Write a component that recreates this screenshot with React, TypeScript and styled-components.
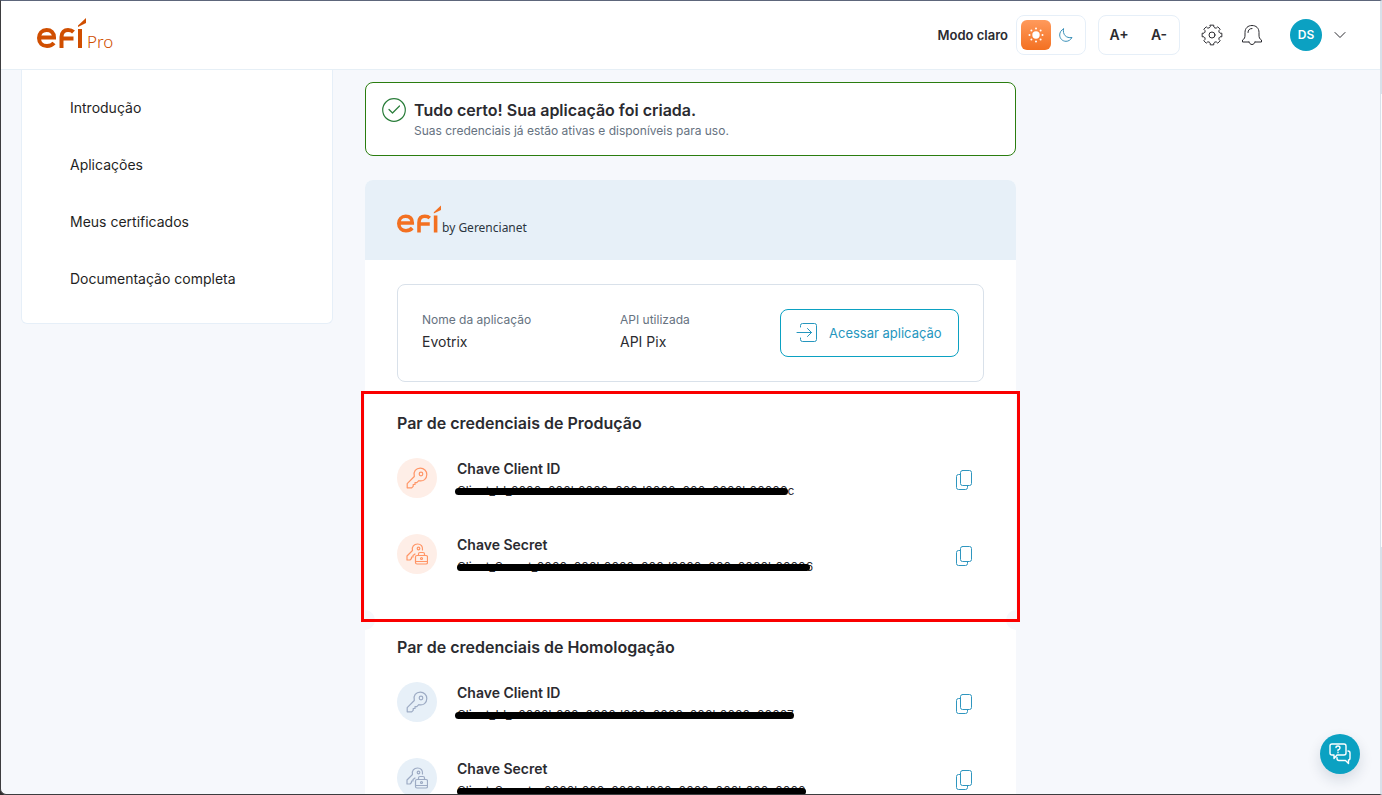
import React from "react";
import styled, { createGlobalStyle, css } from "styled-components";

const Global = createGlobalStyle`
  *, *::before, *::after { box-sizing: border-box; }
  html, body, #root { height: 100%; }
  body {
    margin: 0;
    background: #2e2c2c;
    color: #2b2b30;
    font-family: Inter, "Open Sans", sans-serif;
    font-size: 14px;
    line-height: 20px;
  }
  button { font: inherit; color: inherit; background: none; border: 0; padding: 0; cursor: pointer; }
  h1, h2, h3, p, dl, dt, dd, ul { margin: 0; padding: 0; }
`;

const Window = styled.div`
  height: 100vh;
  display: flex;
  flex-direction: column;
  overflow: hidden;
  background: #f6f8fc;
  border: 1px solid #3d3d3f;
  border-top-color: #5d667b;
  border-right: 2px solid #d8e1ea;
  border-bottom-left-radius: 6px;
`;

const ScrollTrack = styled.div`
  position: fixed;
  top: 94px;
  right: 0;
  bottom: 248px;
  width: 1px;
  background: #fbfcfe;
`;

const Header = styled.header`
  flex: none;
  height: 69px;
  padding: 0 34px 0 36px;
  display: flex;
  align-items: center;
  justify-content: space-between;
  background: #fff;
  border-bottom: 1px solid #e6eff6;
`;

const Brand = styled.a<{ $color: string; $raised?: boolean }>`
  display: flex;
  align-items: flex-end;
  gap: 1px;
  padding-bottom: ${(p) => (p.$raised ? 4 : 0)}px;
  color: ${(p) => p.$color};
  text-decoration: none;
`;

const BrandSuffix = styled.span<{ $small?: boolean }>`
  font-family: "Noto Sans", sans-serif;
  font-size: ${(p) => (p.$small ? 12 : 17)}px;
  font-weight: ${(p) => (p.$small ? 400 : 300)};
  line-height: ${(p) => (p.$small ? 10 : 12)}px;
  color: ${(p) => (p.$small ? "#2b3540" : "inherit")};
`;

const Tools = styled.div`
  display: flex;
  align-items: center;
`;

const ModeLabel = styled.span`
  font-size: 13px;
  font-weight: 600;
  margin-right: 8px;
`;

const Group = styled.div<{ $gap?: number }>`
  display: flex;
  align-items: center;
  gap: ${(p) => p.$gap ?? 0}px;
  height: 40px;
  padding: 0 4px;
  margin-right: 12px;
  border: 1px solid #e6eff8;
  border-radius: 8px;
`;

const ModeButton = styled.button<{ $active?: boolean }>`
  width: 30px;
  height: 30px;
  display: grid;
  place-items: center;
  border-radius: 6px;
  color: #3a8fb7;
  ${(p) =>
    p.$active &&
    css`
      color: #fff;
      background: linear-gradient(#ff9a5c, #f37021);
    `}
`;

const SizeButton = styled.button`
  width: 32px;
  height: 30px;
  font-weight: 600;
`;

const IconButton = styled.button`
  width: 40px;
  height: 40px;
  display: grid;
  place-items: center;
`;

const Profile = styled.button`
  display: flex;
  align-items: center;
  gap: 12px;
  margin-left: 18px;
`;

const Avatar = styled.span`
  width: 32px;
  height: 32px;
  border-radius: 50%;
  background: #0ba1c2;
  color: #fff;
  font-size: 12px;
  font-weight: 600;
  line-height: 32px;
`;

const Body = styled.div`
  flex: 1;
  min-height: 0;
  display: flex;
  align-items: flex-start;
  gap: 32px;
  padding: 0 20px;
  overflow: hidden;
`;

const Sidebar = styled.nav`
  flex: none;
  width: 312px;
  padding: 10px 48px 15px;
  background: #fff;
  border: 1px solid #e6eff8;
  border-top: 0;
  border-radius: 0 0 6px 6px;
`;

const NavLink = styled.a`
  display: block;
  padding: 18px 0 19px;
  color: #1f1f24;
  text-decoration: none;
`;

const Main = styled.main`
  flex: 0 1 651px;
  min-width: 0;
  padding-top: 12px;
`;

const Notice = styled.section`
  display: flex;
  gap: 8px;
  height: 74px;
  padding: 15px 16px;
  background: #fff;
  border: 1px solid #2a7d0f;
  border-radius: 8px;
`;

const NoticeTitle = styled.h1`
  font-size: 16px;
  line-height: 24px;
  font-weight: 600;
`;

const NoticeText = styled.p`
  font-size: 12px;
  line-height: 18px;
  color: #66727f;
`;

const Card = styled.article`
  position: relative;
  margin-top: 24px;
  background: #fff;
  border-radius: 8px 8px 0 0;
`;

const CardHeader = styled.div`
  height: 80px;
  padding: 25px 32px;
  background: #e7f0f8;
  border-radius: 8px 8px 0 0;
`;

const AppInfo = styled.section`
  display: flex;
  align-items: center;
  height: 98px;
  margin: 24px 32px 0;
  padding: 0 24px;
  border: 1px solid #d9e1ea;
  border-radius: 8px;
`;

const Fields = styled.dl`
  flex: 1;
  min-width: 0;
  display: flex;
  padding-bottom: 2px;
`;

const Field = styled.div`
  flex: none;
  width: 198px;

  &:last-child {
    width: auto;
  }
`;

const FieldName = styled.dt`
  font-size: 12px;
  color: #66727f;
`;

const FieldValue = styled.dd`
  line-height: 24px;
`;

const AccessButton = styled.button`
  flex: none;
  display: flex;
  align-items: center;
  gap: 11px;
  width: 179px;
  height: 48px;
  padding-left: 15px;
  font-size: 13px;
  color: #2596be;
  border: 1px solid #0ba1c2;
  border-radius: 8px;
`;

const Credentials = styled.section<{ $marked?: boolean }>`
  position: relative;
  height: 231px;
  padding: 19px 33px 0;
  margin: ${(p) => (p.$marked ? "9px -4px 0" : "-7px -4px 0")};
  border: 3px solid ${(p) => (p.$marked ? "#fa0000" : "transparent")};
`;

const Notch = styled.span<{ $side: "left" | "right" }>`
  position: absolute;
  top: 430px;
  ${(p) => p.$side}: -10px;
  width: 20px;
  height: 20px;
  border-radius: 50%;
  background: #f6f8fc;
`;

const SectionTitle = styled.h2`
  font-size: 16px;
  line-height: 20px;
  font-weight: 600;
  margin-bottom: 25px;
`;

const Row = styled.div`
  display: flex;
  align-items: flex-start;
  height: 76px;
`;

const Badge = styled.span<{ $live?: boolean }>`
  flex: none;
  width: 40px;
  height: 40px;
  margin-right: 20px;
  border-radius: 50%;
  display: grid;
  place-items: center;
  color: ${(p) => (p.$live ? "#ff9566" : "#9dabc4")};
  background: ${(p) => (p.$live ? "#feeee7" : "#e7f0f8")};
`;

const RowText = styled.div`
  flex: 1;
`;

const KeyName = styled.h3`
  font-size: 14px;
  line-height: 22px;
  font-weight: 600;
`;

const KeyValue = styled.p`
  position: relative;
  width: fit-content;
  font-size: 12px;
  line-height: 22px;
`;

const Strike = styled.span<{ $end?: number; $start?: number }>`
  position: absolute;
  top: 8px;
  left: ${(p) => p.$start ?? -2}px;
  right: ${(p) => p.$end ?? 0}px;
  height: 7px;
  border-radius: 4px;
  background: #000;
`;

const CopyButton = styled.button`
  width: 40px;
  height: 44px;
  display: grid;
  place-items: center;
`;

const ChatButton = styled.button`
  position: fixed;
  right: 22px;
  bottom: 21px;
  width: 40px;
  height: 40px;
  display: grid;
  place-items: center;
  border-radius: 50%;
  color: #fff;
  background: #0ba1c2;
  box-shadow: 0 6px 14px rgba(20, 40, 70, 0.14);
`;

const line = { fill: "none", stroke: "currentColor", strokeLinecap: "round", strokeLinejoin: "round" } as const;

const EfiMark = ({ width, height }: { width: number; height: number }) => (
  <svg width={width} height={height} viewBox="0 0 49 30" fill="none" stroke="currentColor" strokeWidth="4" aria-label="efí" role="img">
    <path d="M2.5 19.5H17C17 14.500 14 12 9.600 12C5 12 2 15.500 2 20C2 24.800 5.200 28 10 28C13 28 15.300 27 17 25" />
    <path d="M24.500 30V19C24.500 14 27.500 12 31 12C33.500 12 35 12.500 36.500 14M24.500 20.500H36.500" />
    <path d="M43 11V30" />
    <path d="M41 7.500L49 0V5L41 9Z" fill="currentColor" stroke="none" />
  </svg>
);

const Sun = () => (
  <svg width="16" height="16" viewBox="0 0 16 16" fill="currentColor" aria-hidden>
    <circle cx="8" cy="8" r="3.700" />
    <circle cx="8" cy="1.500" r="1" /><circle cx="8" cy="14.500" r="1" />
    <circle cx="1.500" cy="8" r="1" /><circle cx="14.500" cy="8" r="1" />
    <circle cx="3.400" cy="3.400" r="1" /><circle cx="12.600" cy="3.400" r="1" />
    <circle cx="3.400" cy="12.600" r="1" /><circle cx="12.600" cy="12.600" r="1" />
  </svg>
);

const Moon = () => (
  <svg width="14" height="14" viewBox="0 0 14 14" {...line} aria-hidden>
    <path d="M4.500 1C3.500 6.500 7 10.500 13 9.500C11.500 12 9.500 13.300 7 13.300C3.500 13.300.7 10.500.7 7C.7 4.200 2.200 2 4.500 1Z" />
  </svg>
);

const gearPath = Array.from({ length: 8 }, (_, i) => {
  const at = (deg: number, r: number) => {
    const a = ((i * 45 + deg - 90) * Math.PI) / 180;
    return `${(11 + r * Math.cos(a)).toFixed(2)} ${(11 + r * Math.sin(a)).toFixed(2)}`;
  };
  return `${i ? "L" : "M"}${at(-10, 10)}L${at(10, 10)}L${at(13, 8.2)}Q${at(22.5, 7)} ${at(32, 8.2)}`;
}).join("") + "Z";

const Gear = () => (
  <svg width="22" height="22" viewBox="0 0 22 22" {...line} aria-hidden>
    <path d={gearPath} />
    <circle cx="11" cy="11" r="3" />
  </svg>
);

const Bell = () => (
  <svg width="22" height="22" viewBox="0 0 22 22" {...line} aria-hidden>
    <path d="M8 18H1.500V16C3.500 15 4 13.500 4 11V8.500C4 4 7 1.500 11 1.500S18 4 18 8.500V11C18 13.500 18.500 15 20.500 16V18H14" />
    <path d="M8 18C8.500 19.500 9.500 20.500 11 20.500S13.500 19.500 14 18M7 8.500C7 6 8.500 4.500 11 4.500" />
  </svg>
);

const Chevron = () => (
  <svg width="12" height="8" viewBox="0 0 12 8" {...line} aria-hidden>
    <path d="M1 1.500L6 6.500L11 1.500" />
  </svg>
);

const CheckCircle = () => (
  <svg width="24" height="24" viewBox="0 0 24 24" {...line} strokeWidth="1.200" color="#2a7d3a" aria-hidden>
    <circle cx="12" cy="12" r="11.300" />
    <path d="M7 11.500L10.500 15L17.500 8" />
  </svg>
);

const Enter = () => (
  <svg width="22" height="20" viewBox="0 0 22 20" {...line} aria-hidden>
    <path d="M4.500 4V2.500Q4.500.5 6.500.5H18.500Q20.500.5 20.500 2.500V16.500Q20.500 18.500 18.500 18.500H6.500Q4.500 18.500 4.500 16.500V15M1 9.500H15.500M11.500 5.500L15.500 9.500L11.500 13.500" />
  </svg>
);

const Copy = () => (
  <svg width="18" height="22" viewBox="0 0 18 22" {...line} color="#2f96bf" aria-hidden>
    <rect x="5.500" y="1.500" width="11" height="15" rx="2" />
    <path d="M5.500 5.500H3.500Q1.500 5.500 1.500 7.500V18.500Q1.500 20.500 3.500 20.500H10.500Q12.500 20.500 12.500 18.500V16.500" />
  </svg>
);

const Key = () => (
  <svg width="22" height="22" viewBox="0 0 22 22" {...line} strokeWidth="1.200" aria-hidden>
    <path d="M8.300 9.500C7 4.500 10 1.200 14.300 1.200C18 1.200 20.800 4 20.800 7.500C20.800 11.800 17.500 14.800 12.800 13.700L10.800 15.700H9V17.500H7.200V19.300L5.700 20.800H1.200V16.600Z" />
    <circle cx="15" cy="7" r="1.800" />
  </svg>
);

const KeyLock = () => (
  <svg width="22" height="22" viewBox="0 0 22 22" {...line} strokeWidth="1.200" aria-hidden>
    <path d="M6.500 7.500C5.500 4 8 1 11.500 1C15 1 17 3.500 16.500 7M9 11L7 12.500V14H5.500V15.500L4 17H1V13L6.500 7.500" />
    <circle cx="12.500" cy="5.500" r="1.300" />
    <rect x="9.500" y="12.500" width="12" height="8.500" rx="1.500" />
    <path d="M12.500 12.500V11Q12.500 9.500 14 9.500H17Q18.500 9.500 18.500 11V12.500M10 18.500H21" />
    <circle cx="15.500" cy="15.500" r="1" />
  </svg>
);

const Chat = () => (
  <svg width="22" height="22" viewBox="0 0 22 22" {...line} strokeWidth="1.400" aria-hidden>
    <path d="M3 1H15Q17 1 17 3V10Q17 12 15 12H8L5 15.500V12H3Q1 12 1 10V3Q1 1 3 1Z" />
    <path d="M19 8Q21 8 21 10V15Q21 17 19.500 17V20.500L16.500 17.500H10Q8 17.500 8 15.500V14.500" />
    <path d="M7 4.500Q7 3 9 3T11 5Q11 6.300 9 7V7.800M9 9.500V9.700" />
  </svg>
);

const navItems = ["Introdução", "Aplicações", "Meus certificados", "Documentação completa"];

type Credential = { name: string; value: string; start?: number; end?: number; locked?: boolean };

const production: Credential[] = [
  { name: "Chave Client ID", value: "Client_Id_0000a000b0000c000d0000e000a0000b00000c", end: 6 },
  { name: "Chave Secret", value: "Client_Secret_0000a000b0000c000d0000e000a0000b00006", start: 0, end: 3, locked: true },
];
const sandbox: Credential[] = [
  { name: "Chave Client ID", value: "Client_Id_a0000b000c0000d000e0000a000b0000c00007" },
  { name: "Chave Secret", value: "Client_Secret_a0000b000c0000d000e0000a000b000c0000", start: 0, locked: true },
];

const CredentialList = ({ title, items, live }: { title: string; items: Credential[]; live?: boolean }) => (
  <Credentials $marked={live}>
    <SectionTitle>{title}</SectionTitle>
    {items.map((c) => (
      <Row key={c.name}>
        <Badge $live={live}>{c.locked ? <KeyLock /> : <Key />}</Badge>
        <RowText>
          <KeyName>{c.name}</KeyName>
          <KeyValue>
            {c.value}
            <Strike $start={c.start} $end={c.end} />
          </KeyValue>
        </RowText>
        <CopyButton aria-label={`Copiar ${c.name}`}><Copy /></CopyButton>
      </Row>
    ))}
  </Credentials>
);

export default function App() {
  return (
    <>
      <Global />
      <Window>
        <Header>
          <Brand href="#" $color="#d04e00" $raised>
            <EfiMark width={49} height={30} />
            <BrandSuffix>Pro</BrandSuffix>
          </Brand>
          <Tools>
            <ModeLabel>Modo claro</ModeLabel>
            <Group>
              <ModeButton $active aria-label="Modo claro"><Sun /></ModeButton>
              <ModeButton aria-label="Modo escuro"><Moon /></ModeButton>
            </Group>
            <Group $gap={8}>
              <SizeButton>A+</SizeButton>
              <SizeButton>A-</SizeButton>
            </Group>
            <IconButton aria-label="Configurações"><Gear /></IconButton>
            <IconButton aria-label="Notificações"><Bell /></IconButton>
            <Profile aria-label="Perfil"><Avatar>DS</Avatar><Chevron /></Profile>
          </Tools>
        </Header>
        <Body>
          <Sidebar>
            {navItems.map((item) => <NavLink href="#" key={item}>{item}</NavLink>)}
          </Sidebar>
          <Main>
            <Notice>
              <CheckCircle />
              <div>
                <NoticeTitle>Tudo certo! Sua aplicação foi criada.</NoticeTitle>
                <NoticeText>Suas credenciais já estão ativas e disponíveis para uso.</NoticeText>
              </div>
            </Notice>
            <Card>
              <CardHeader>
                <Brand href="#" $color="#f37021">
                  <EfiMark width={44} height={28} />
                  <BrandSuffix $small>by Gerencianet</BrandSuffix>
                </Brand>
              </CardHeader>
              <AppInfo>
                <Fields>
                  <Field><FieldName>Nome da aplicação</FieldName><FieldValue>Evotrix</FieldValue></Field>
                  <Field><FieldName>API utilizada</FieldName><FieldValue>API Pix</FieldValue></Field>
                </Fields>
                <AccessButton><Enter />Acessar aplicação</AccessButton>
              </AppInfo>
              <Notch $side="left" />
              <Notch $side="right" />
              <CredentialList title="Par de credenciais de Produção" items={production} live />
              <CredentialList title="Par de credenciais de Homologação" items={sandbox} />
            </Card>
          </Main>
        </Body>
        <ChatButton aria-label="Ajuda"><Chat /></ChatButton>
        <ScrollTrack />
      </Window>
    </>
  );
}
